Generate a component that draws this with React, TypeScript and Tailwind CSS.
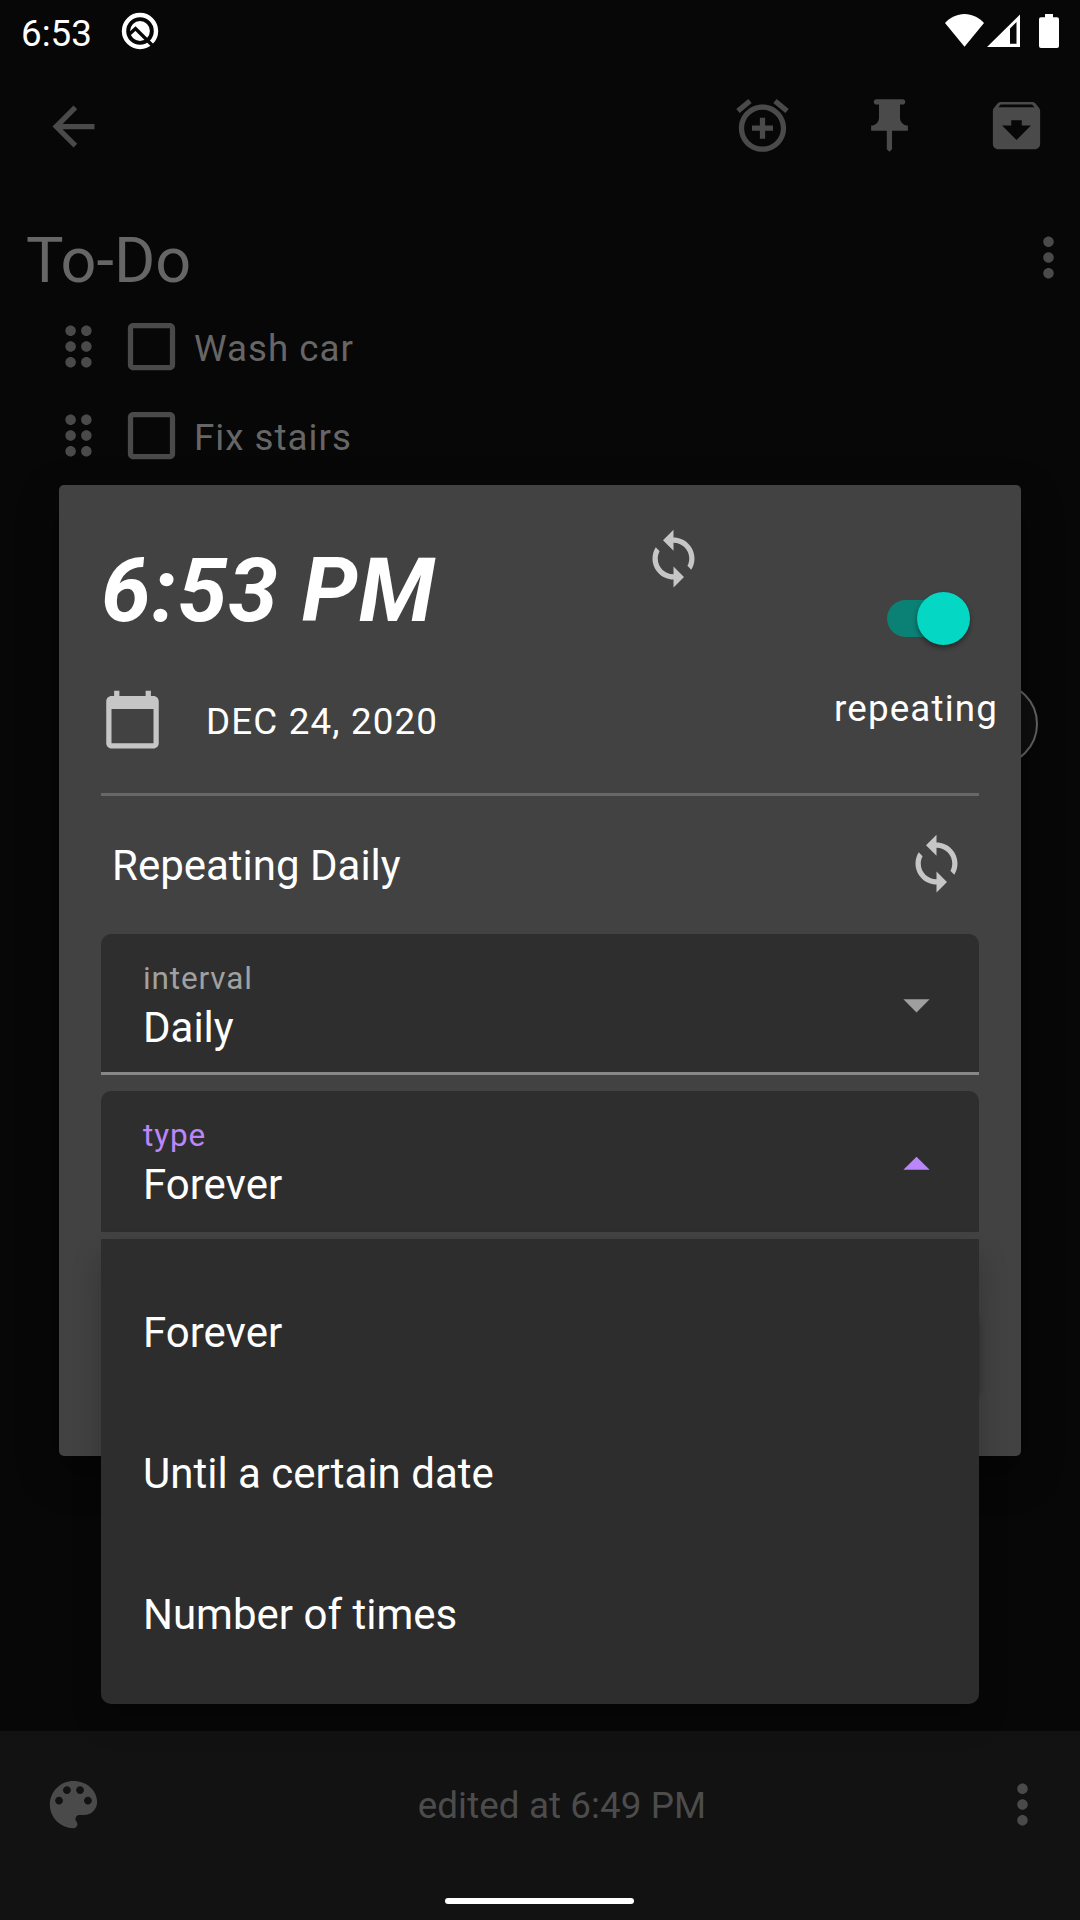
import React from "react";

const paths = {
  back: "M20 11H7.83l5.59-5.59L12 4l-8 8 8 8 1.41-1.41L7.83 13H20v-2z",
  addAlarm:
    "M7.88 3.39L6.6 1.86 2 5.71l1.29 1.53 4.59-3.85zM22 5.72l-4.6-3.86-1.29 1.53 4.6 3.86L22 5.72zM12 4c-4.97 0-9 4.03-9 9s4.02 9 9 9c4.97 0 9-4.03 9-9s-4.03-9-9-9zm0 16c-3.87 0-7-3.13-7-7s3.13-7 7-7 7 3.13 7 7-3.13 7-7 7zm1-11h-2v3H8v2h3v3h2v-3h3v-2h-3V9z",
  pin: "M16 9V4h1c.55 0 1-.45 1-1s-.45-1-1-1H7c-.55 0-1 .45-1 1s.45 1 1 1h1v5c0 1.66-1.34 3-3 3v2h5.97v7l1 1 1-1v-7H19v-2c-1.66 0-3-1.34-3-3z",
  archive:
    "M20.54 5.23l-1.39-1.68C18.88 3.21 18.47 3 18 3H6c-.47 0-.88.21-1.16.55L3.46 5.23C3.17 5.57 3 6.02 3 6.5V19c0 1.1.9 2 2 2h14c1.1 0 2-.9 2-2V6.5c0-.48-.17-.93-.46-1.27zM12 17.5L6.5 12H10v-2h4v2h3.5L12 17.5zM5.12 5l.81-1h12l.94 1H5.12z",
  more: "M12 8c1.1 0 2-.9 2-2s-.9-2-2-2-2 .9-2 2 .9 2 2 2zm0 2c-1.1 0-2 .9-2 2s.9 2 2 2 2-.9 2-2-.9-2-2-2zm0 6c-1.1 0-2 .9-2 2s.9 2 2 2 2-.9 2-2-.9-2-2-2z",
  drag: "M11 18c0 1.1-.9 2-2 2s-2-.9-2-2 .9-2 2-2 2 .9 2 2zm-2-8c-1.1 0-2 .9-2 2s.9 2 2 2 2-.9 2-2-.9-2-2-2zm0-6c-1.1 0-2 .9-2 2s.9 2 2 2 2-.9 2-2-.9-2-2-2zm6 4c1.1 0 2-.9 2-2s-.9-2-2-2-2 .9-2 2 .9 2 2 2zm0 2c-1.1 0-2 .9-2 2s.9 2 2 2 2-.9 2-2-.9-2-2-2zm0 6c-1.1 0-2 .9-2 2s.9 2 2 2 2-.9 2-2-.9-2-2-2z",
  checkbox:
    "M19 5v14H5V5h14m0-2H5c-1.1 0-2 .9-2 2v14c0 1.1.9 2 2 2h14c1.1 0 2-.9 2-2V5c0-1.1-.9-2-2-2z",
  sync: "M12 4V1L8 5l4 4V6c3.31 0 6 2.69 6 6 0 1.01-.25 1.97-.7 2.8l1.46 1.46C19.54 15.03 20 13.57 20 12c0-4.42-3.58-8-8-8zm0 14c-3.31 0-6-2.69-6-6 0-1.01.25-1.97.7-2.8L5.24 7.74C4.46 8.97 4 10.43 4 12c0 4.42 3.58 8 8 8v3l4-4-4-4v3z",
  calendar:
    "M20 3h-1V1h-2v2H7V1H5v2H4c-1.1 0-2 .9-2 2v16c0 1.1.9 2 2 2h16c1.1 0 2-.9 2-2V5c0-1.1-.9-2-2-2zm0 18H4V8h16v13z",
  palette:
    "M12 3c-4.97 0-9 4.03-9 9s4.03 9 9 9c.83 0 1.5-.67 1.5-1.5 0-.39-.15-.74-.39-1.01-.23-.26-.38-.61-.38-.99 0-.83.67-1.5 1.5-1.5H16c2.76 0 5-2.24 5-5 0-4.42-4.03-8-9-8zm-5.5 9c-.83 0-1.5-.67-1.5-1.5S5.67 9 6.5 9 8 9.67 8 10.5 7.33 12 6.5 12zm3-4C8.67 8 8 7.33 8 6.5S8.67 5 9.5 5s1.5.67 1.5 1.5S10.33 8 9.5 8zm5 0c-.83 0-1.5-.67-1.5-1.5S13.67 5 14.5 5s1.5.67 1.5 1.5S15.33 8 14.5 8zm3 4c-.83 0-1.5-.67-1.5-1.5S16.67 9 17.5 9s1.5.67 1.5 1.5-.67 1.5-1.5 1.5z",
  down: "M7 10l5 5 5-5z",
  up: "M7 14l5-5 5 5z",
};

function Icon({ name, className = "" }: { name: keyof typeof paths; className?: string }) {
  return (
    <svg viewBox="0 0 24 24" className={`size-[63px] shrink-0 fill-current ${className}`}>
      <path d={paths[name]} />
    </svg>
  );
}

function StatusBar() {
  return (
    <header className="flex h-[63px] shrink-0 pl-[21px] pr-[21px] text-white">
      <span className="mt-[13px] text-[36.75px] leading-[42px]">6:53</span>
      <svg viewBox="0 0 38 38" className="ml-[29px] mt-[12px] size-[38px]">
        <circle cx="19" cy="19" r="16" fill="none" stroke="#fff" strokeWidth="4.4" />
        <circle cx="19" cy="19" r="9.9" fill="#fff" />
        <path d="M8 22.500L14.500 16.500L32 34" fill="none" stroke="#070707" strokeWidth="3.4" />
      </svg>
      <div className="ml-auto flex pt-[14px]">
        <svg viewBox="0 0 39 33" className="h-[33px] w-[39px] fill-white">
          <path d="M19.5 32.7L0 9C5 3.500 12 0 19.500 0S34 3.500 39 9z" />
        </svg>
        <svg viewBox="0 0 33 33" className="ml-[3px] h-[33px] w-[33px] fill-white">
          <path fillRule="evenodd" d="M0 33L33 0.500V33zM23 14.500V29.700H29.500V8z" />
        </svg>
        <svg viewBox="0 0 20 34" className="ml-[19px] h-[34px] w-[20px] fill-white">
          <path d="M6 0h8v3.300h4q2 0 2 2V32q0 2-2 2H2q-2 0-2-2V5.300q0-2 2-2h4z" />
        </svg>
      </div>
    </header>
  );
}

function NoteItem({ text }: { text: string }) {
  return (
    <li className="flex h-[89px] items-center gap-[10px] pl-[47px]">
      <Icon name="drag" />
      <Icon name="checkbox" />
      <span className="ml-px mt-[4px] text-[36.75px] leading-[42px] tracking-[1px] text-[#666]">{text}</span>
    </li>
  );
}

function Note() {
  return (
    <>
      <nav className="flex h-[126px] shrink-0 items-center pl-[42px] pr-[32px]">
        <Icon name="back" className="mt-px" />
        <div className="-mt-px ml-auto flex gap-[64px]">
          <Icon name="addAlarm" />
          <Icon name="pin" />
          <Icon name="archive" />
        </div>
      </nav>
      <main className="flex flex-1 flex-col">
        <div className="flex h-[113px] items-start justify-between pl-[26px] pt-[37px]">
          <h1 className="mt-[3px] text-[63px] leading-[63px] text-[#666]">To-Do</h1>
          <Icon name="more" />
        </div>
        <ul>
          <NoteItem text="Wash car" />
          <NoteItem text="Fix stairs" />
        </ul>
        <div className="mr-[42px] mt-[202px] size-[84px] self-end rounded-full border-2 border-[#666] bg-[#0f0f0f]" />
      </main>
      <footer className="flex h-[189px] shrink-0 flex-col items-center bg-[#121212]">
        <div className="flex w-full items-center justify-between pl-[42px] pr-[26px] pt-[42px]">
          <Icon name="palette" />
          <span className="ml-[28px] mt-[3px] text-[36.75px] leading-[42px] tracking-[0.1px] text-[#4c4c4c]">edited at 6:49 PM</span>
          <Icon name="more" />
        </div>
        <div className="mr-px mt-[62px] h-[6px] w-[189px] rounded-full bg-white" />
      </footer>
    </>
  );
}

function Field({ label, value, open }: { label: string; value: string; open?: boolean }) {
  return (
    <div
      className={
        open
          ? "flex h-[141px] justify-between rounded-t-[10px] bg-[#2e2e2e] pl-[42px] pr-[31px]"
          : "flex h-[141px] justify-between rounded-t-[10px] border-b-[3px] border-[#878787] bg-[#2e2e2e] pl-[42px] pr-[31px]"
      }
    >
      <div className="flex flex-col pt-[25px]">
        <span
          className={
            open
              ? "text-[31.5px] leading-[40px] tracking-[0.85px] text-[#bb86fc]"
              : "text-[31.5px] leading-[40px] tracking-[0.85px] text-[#a1a1a1]"
          }
        >
          {label}
        </span>
        <span className="mt-[5px] text-[42px] leading-[48px]">{value}</span>
      </div>
      <Icon
        name={open ? "up" : "down"}
        className={open ? "mt-[42px] text-[#bb86fc]" : "mt-[39px] text-[#9f9f9f]"}
      />
    </div>
  );
}

function ReminderDialog() {
  return (
    <section className="absolute left-[59px] top-[485px] h-[971px] w-[962px] rounded-[5px] bg-[#424242] px-[42px] text-white shadow-[0_16px_40px_rgba(0,0,0,0.4)]">
      <div className="flex h-[311px] border-b-[3px] border-[#686868]">
        <div className="w-[541px] shrink-0 pt-[61px]">
          <div className="whitespace-pre text-[89.25px] font-bold italic leading-[90px] tracking-[1px]">6:53 PM</div>
          <div className="mt-[52px] flex h-[63px]">
            <Icon name="calendar" className="text-[#c6c6c6]" />
            <span className="ml-[42px] mt-[13px] text-[36.75px] leading-[42px] tracking-[1.15px]">DEC 24, 2020</span>
          </div>
        </div>
        <Icon name="sync" className="mt-[42px] text-[#c6c6c6]" />
        <div className="ml-[129px] mt-[107px] w-[165px] shrink-0">
          <div className="ml-[53px] flex h-[53px] w-[83px] items-center">
            <div className="h-[37px] w-[67px] shrink-0 rounded-full bg-[#0b8074]" />
            <div className="-ml-[37px] size-[53px] shrink-0 rounded-full bg-[#04d7c4] shadow-[0_3px_5px_rgba(0,0,0,0.4)]" />
          </div>
          <div className="mt-[43px] text-[36.75px] leading-[42px] tracking-[1.15px]">repeating</div>
        </div>
      </div>
      <div className="flex h-[138px] items-center justify-between pl-[11px] pr-[11px]">
        <span className="mt-[2px] text-[42px] leading-[48px]">Repeating Daily</span>
        <Icon name="sync" className="-mt-[3px] text-[#c6c6c6]" />
      </div>
      <div className="flex flex-col gap-[16px]">
        <Field label="interval" value="Daily" />
        <Field label="type" value="Forever" open />
      </div>
      <div className="ml-auto mt-[80px] h-[84px] w-[168px] rounded-[10px] bg-[#2d2d2d] shadow-[0_3px_6px_rgba(0,0,0,0.3)]" />
    </section>
  );
}

function TypeMenu() {
  return (
    <ul className="absolute left-[101px] top-[1239px] h-[465px] w-[878px] rounded-b-[10px] bg-[#2d2d2d] pl-[42px] pt-[23px] text-[42px] leading-[141px] text-white shadow-[0_18px_30px_rgba(0,0,0,0.22)]">
      {["Forever", "Until a certain date", "Number of times"].map((t) => (
        <li key={t}>{t}</li>
      ))}
    </ul>
  );
}

export default function App() {
  return (
    <div className="relative flex h-[1920px] w-[1080px] flex-col overflow-hidden bg-[#070707] font-['Roboto',sans-serif] text-[#4a4a4a]">
      <StatusBar />
      <Note />
      <ReminderDialog />
      <TypeMenu />
    </div>
  );
}
